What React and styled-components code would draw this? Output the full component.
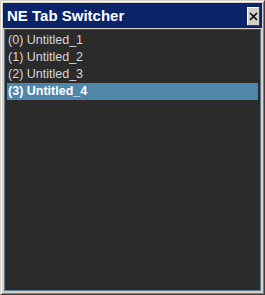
import React from 'react';
import styled, { createGlobalStyle } from 'styled-components';

const Global = createGlobalStyle`
  html, body {
    margin: 0;
    padding: 0;
    background: #d4d0c8;
  }
`;

const Window = styled.div`
  box-sizing: border-box;
  width: 265px;
  height: 295px;
  display: flex;
  flex-direction: column;
  background: #d4d0c8;
  border: 1px solid #d4d0c8;
  border-right-color: #404040;
  border-bottom-color: #404040;
  box-shadow: inset 1px 1px 0 #ffffff, inset -1px -1px 0 #808080;
  padding: 2px 3px 3px 3px;
  font-family: 'Liberation Sans', Arial, sans-serif;
`;

const TitleBar = styled.div`
  height: 25px;
  display: flex;
  align-items: center;
  justify-content: space-between;
  background: #0a246a;
  padding: 0 2px 0 2px;
  margin: 0 -1px;
`;

const Title = styled.span`
  color: #ffffff;
  font-weight: bold;
  font-size: 15px;
  padding-left: 2px;
`;

const CloseButton = styled.button`
  box-sizing: border-box;
  width: 13px;
  height: 19px;
  padding: 0;
  margin-top: 1px;
  background: #d4d0c8;
  border: none;
  box-shadow: inset -1px -1px 0 #404040, inset 1px 1px 0 #ffffff;
  display: flex;
  align-items: center;
  justify-content: center;
`;

const List = styled.ul`
  flex: 1;
  margin: 1px 0 0 0;
  padding: 2px 2px 0 2px;
  list-style: none;
  background: #2b2b2b;
  border: 1px solid #5e7d93;
  border-top-color: #3a4a56;
`;

const Item = styled.li`
  height: 17px;
  line-height: 17px;
  padding-left: 1px;
  font-size: 12.5px;
  color: ${(p) => (p.selected ? '#ffffff' : '#d8d8d8')};
  font-weight: ${(p) => (p.selected ? 'bold' : 'normal')};
  background: ${(p) => (p.selected ? '#4f86a9' : 'transparent')};
`;

const tabs = ['Untitled_1', 'Untitled_2', 'Untitled_3', 'Untitled_4'];

export default function App() {
  return (
    <>
      <Global />
      <Window>
        <TitleBar>
          <Title>NE Tab Switcher</Title>
          <CloseButton>
            <svg width="9" height="9" viewBox="0 0 9 9">
              <path d="M1 1 L8 8 M8 1 L1 8" stroke="#000" strokeWidth="1.6" />
            </svg>
          </CloseButton>
        </TitleBar>
        <List>
          {tabs.map((t, i) => (
            <Item key={t} selected={i === 3}>
              ({i}) {t}
            </Item>
          ))}
        </List>
      </Window>
    </>
  );
}
